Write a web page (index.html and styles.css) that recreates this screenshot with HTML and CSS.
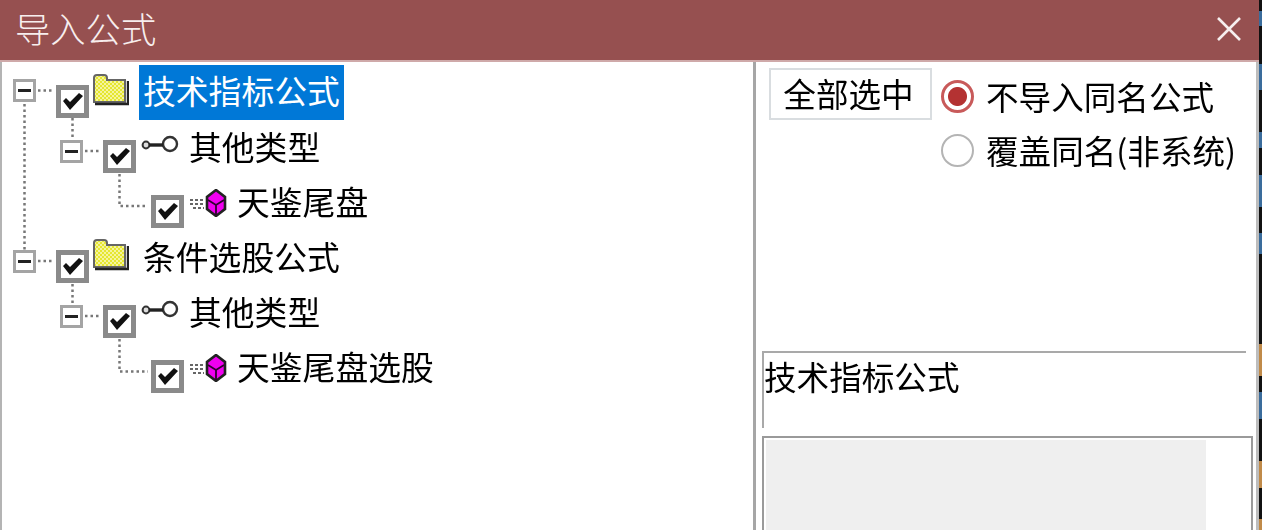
FILE: index.html
```html
<!DOCTYPE html>
<html lang="zh-CN">
<head>
<meta charset="utf-8">
<title>导入公式</title>
<link rel="stylesheet" href="styles.css">
</head>
<body>
<div class="window">
  <div class="dialog">
    <header class="titlebar">
      <span class="title">导入公式</span>
      <svg class="close" viewBox="0 0 26 26" width="26" height="26"><path d="M2 2 24 24M24 2 2 24" stroke="#f6eeee" stroke-width="2.6" fill="none"/></svg>
    </header>
    <main class="content">
      <section class="tree">
        <svg class="connectors" width="750" height="470" viewBox="0 60 750 470">
          <path class="dots" d="M24.5 104V250M72.5 118V138M119.5 174V206H148M38 90.5H53M85 151H100M72.5 284V304M38 261H53M85 316H100M119.5 339V371.5H148"/>
        </svg>

        <div class="row l0 first">
          <span class="exp"><i></i></span>
          <span class="check"><svg viewBox="0 0 20 18" width="20" height="18"><path d="M0 8 3 5 7 9 16 0 20 3 7 17Z"/></svg></span>
          <svg class="folder" viewBox="0 0 37 33" width="37" height="33">
            <defs><pattern id="dither" width="4" height="4" patternUnits="userSpaceOnUse"><rect width="4" height="4" fill="#f4f4a0"/><rect width="2" height="2" fill="#e6e630"/><rect x="2" y="2" width="2" height="2" fill="#e6e630"/></pattern></defs>
            <path d="M2 29V5Q2 2 5 2H12Q15 2 15 5V7H33V29Z" fill="url(#dither)" stroke="#666" stroke-width="2"/>
            <path d="M3 31H36V8" fill="none" stroke="#222" stroke-width="2.4"/>
          </svg>
          <span class="label selected">技术指标公式</span>
        </div>

        <div class="row l1">
          <span class="exp"><i></i></span>
          <span class="check"><svg viewBox="0 0 20 18" width="20" height="18"><path d="M0 8 3 5 7 9 16 0 20 3 7 17Z"/></svg></span>
          <svg class="key" viewBox="0 0 38 20" width="38" height="20"><circle cx="29" cy="9" r="7" fill="#fff" stroke="#333" stroke-width="2.4"/><circle cx="5" cy="10" r="3.4" fill="#ddd" stroke="#333" stroke-width="2"/><path d="M8 10H22" stroke="#222" stroke-width="3.4"/></svg>
          <span class="label">其他类型</span>
        </div>

        <div class="row l2">
          <span class="check"><svg viewBox="0 0 20 18" width="20" height="18"><path d="M0 8 3 5 7 9 16 0 20 3 7 17Z"/></svg></span>
          <svg class="gem" viewBox="0 0 38 28" width="38" height="28"><path class="dash" d="M1 11H14M1 15H14M4 19H15"/><path d="M27 1 36 8V20L27 27 18 20V8Z" fill="#f000f0" stroke="#222" stroke-width="2.6"/><path d="M19 11 27 16 35 11M27 16V26" fill="none" stroke="#300030" stroke-width="1.8"/></svg>
          <span class="label">天鉴尾盘</span>
        </div>

        <div class="row l0">
          <span class="exp"><i></i></span>
          <span class="check"><svg viewBox="0 0 20 18" width="20" height="18"><path d="M0 8 3 5 7 9 16 0 20 3 7 17Z"/></svg></span>
          <svg class="folder" viewBox="0 0 37 33" width="37" height="33">
            <path d="M2 29V5Q2 2 5 2H12Q15 2 15 5V7H33V29Z" fill="url(#dither)" stroke="#666" stroke-width="2"/>
            <path d="M3 31H36V8" fill="none" stroke="#222" stroke-width="2.4"/>
          </svg>
          <span class="label">条件选股公式</span>
        </div>

        <div class="row l1">
          <span class="exp"><i></i></span>
          <span class="check"><svg viewBox="0 0 20 18" width="20" height="18"><path d="M0 8 3 5 7 9 16 0 20 3 7 17Z"/></svg></span>
          <svg class="key" viewBox="0 0 38 20" width="38" height="20"><circle cx="29" cy="9" r="7" fill="#fff" stroke="#333" stroke-width="2.4"/><circle cx="5" cy="10" r="3.4" fill="#ddd" stroke="#333" stroke-width="2"/><path d="M8 10H22" stroke="#222" stroke-width="3.4"/></svg>
          <span class="label">其他类型</span>
        </div>

        <div class="row l2">
          <span class="check"><svg viewBox="0 0 20 18" width="20" height="18"><path d="M0 8 3 5 7 9 16 0 20 3 7 17Z"/></svg></span>
          <svg class="gem" viewBox="0 0 38 28" width="38" height="28"><path class="dash" d="M1 11H14M1 15H14M4 19H15"/><path d="M27 1 36 8V20L27 27 18 20V8Z" fill="#f000f0" stroke="#222" stroke-width="2.6"/><path d="M19 11 27 16 35 11M27 16V26" fill="none" stroke="#300030" stroke-width="1.8"/></svg>
          <span class="label">天鉴尾盘选股</span>
        </div>
      </section>

      <aside class="side">
        <div class="controls">
          <button class="select-all" type="button">全部选中</button>
          <div class="radios">
            <div class="radio on"><span class="mark"></span><span>不导入同名公式</span></div>
            <div class="radio"><span class="mark"></span><span>覆盖同名(非系统)</span></div>
          </div>
        </div>
        <div class="group">技术指标公式</div>
        <div class="preview"><div class="preview-fill"></div></div>
      </aside>
    </main>
  </div>
  <div class="backdrop"></div>
</div>
</body>
</html>
```
FILE: styles.css
```css
* { box-sizing: border-box; }
html, body { margin: 0; height: 530px; overflow: hidden; background: #fff; }
body { font-family: "Noto Sans CJK SC", "Liberation Sans", sans-serif; color: #000; }

.window { display: flex; width: 1262px; height: 530px; filter: blur(0.5px); }
.dialog { width: 1259px; flex: none; display: flex; flex-direction: column; }
.backdrop { flex: 1; background: linear-gradient(#111 0 2%, #3a6c9c 2% 5%, #111 5% 12%, #3a6c9c 12% 17%, #111 17% 25%, #3a6c9c 25% 28%, #111 28% 33%, #3a6c9c 33% 39%, #111 39% 44%, #3a6c9c 44% 48%, #111 48% 65%, #c08a48 65% 71%, #111 71% 74%, #3a6c9c 74% 79%, #111 79% 87%, #c08a48 87% 92%, #111 92% 98%, #c08a48 98% 100%); }

.titlebar { height: 62px; flex: none; display: flex; align-items: center; justify-content: space-between; padding: 0 17px 2px 15px; background: #965050; border-bottom: 2px solid #cfa9a9; }
.title { font-size: 35.3px; line-height: 44px; margin-top: -2px; font-weight: 300; color: #f7eeee; }

.content { flex: 1; display: flex; min-height: 0; border-right: 3px solid #bdbdbd; }

.tree { position: relative; width: 756px; flex: none; padding-top: 3px; border-left: 2px solid #b4b4b4; border-right: 3px solid #a6a6a6; }
.connectors { position: absolute; left: -2px; top: -2px; }
.dots { fill: none; stroke: #777; stroke-width: 2.5; stroke-dasharray: 2.5 3; }
.dash { fill: none; stroke: #666; stroke-width: 1.8; stroke-dasharray: 3 2; }

.row { display: flex; align-items: flex-start; height: 55px; }
.l0 { padding-left: 11px; }
.l1 { padding-left: 58px; }
.l2 { padding-left: 149px; }

.exp { width: 23px; height: 23px; flex: none; display: flex; align-items: center; justify-content: center; margin: 20px 20px 0 0; background: #fff; border: 3px solid #a4a4a4; }
.first .exp { margin-top: 14px; }
.exp i { width: 13px; height: 3px; background: #222; }
.check { width: 33px; height: 33px; flex: none; display: flex; align-items: center; justify-content: center; margin: 20px 5px 0 0; background: #fff; border: 5px solid #8a8a8a; }
.check path { fill: #111; }
.l0 .check { margin-right: 3px; }

.folder { flex: none; margin-top: 8px; }
.key { flex: none; margin-top: 15px; }
.gem { flex: none; margin-top: 14px; }

.label { flex: none; margin-top: 1px; margin-left: 10px; padding: 0 3px 5px 4px; height: 54px; font-size: 32.8px; line-height: 50px; font-weight: 400; white-space: nowrap; }
.l1 .label, .l2 .label { margin-left: 6px; }
.selected { margin-top: 0; height: 55px; background: #0078d7; color: #fff; padding-right: 4px; }

.side { flex: 1; display: flex; flex-direction: column; padding: 6px 3px 0 6px; }
.controls { display: flex; align-items: flex-start; height: 283px; flex: none; }
.select-all { width: 163px; height: 52px; padding: 0 4px 2px 0; margin: 0 9px 0 7px; background: #fff; border: 2px solid #d9dde0; font: 400 32.6px/46px "Noto Sans CJK SC", sans-serif; color: #000; }
.radios { display: flex; flex-direction: column; padding-top: 1px; }
.radio { display: flex; align-items: center; gap: 12px; height: 54px; font-size: 32.6px; font-weight: 400; white-space: nowrap; }
.radio span:last-child { margin-top: -1px; }
.mark { width: 33px; height: 33px; flex: none; border-radius: 50%; background: #fff; border: 2.5px solid #b4b4b4; }
.on .mark { border: 3px solid #c85a5a; background: radial-gradient(circle, #b43232 0 9px, #fff 10px); }

.group { height: 77px; flex: none; margin-right: 7px; border-top: 2px solid #a9a9a9; border-left: 2px solid #a9a9a9; font-size: 32.6px; line-height: 45px; font-weight: 400; }
.preview { flex: 1; margin-top: 8px; border: 2px solid #9a9a9a; border-bottom: 0; padding: 2px 0 0 2px; background: #fff; }
.preview-fill { width: 440px; height: 100%; background: #efefef; }
```
